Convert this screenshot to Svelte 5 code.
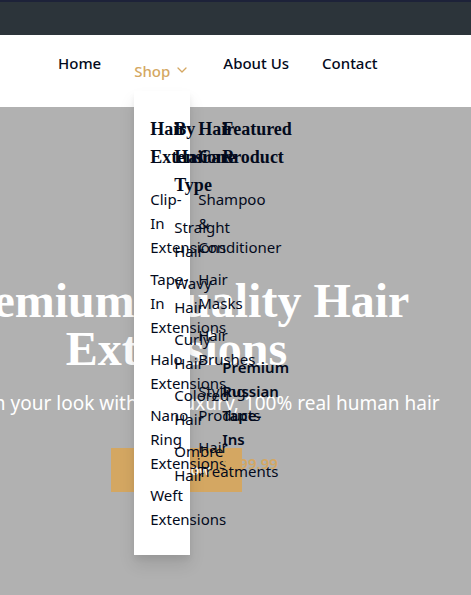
<script>
  const menu = [
    {
      title: 'Hair Extensions',
      items: ['Clip-In Extensions', 'Tape-In Extensions', 'Halo Extensions', 'Nano Ring Extensions', 'Weft Extensions']
    },
    {
      title: 'By Hair Type',
      items: ['Straight Hair', 'Wavy Hair', 'Curly Hair', 'Colored Hair', 'Ombre Hair']
    },
    {
      title: 'Hair Care',
      items: ['Shampoo & Conditioner', 'Hair Masks', 'Hair Brushes', 'Styling Products', 'Hair Treatments']
    }
  ];
</script>

<div class="page">
  <div class="topbar"></div>
  <header>
    <nav>
      <a href="#home">Home</a>
      <div class="shop">
        <a class="active" href="#shop">
          Shop
          <svg width="16" height="16" viewBox="0 0 16 16" fill="none" stroke="currentColor" stroke-width="1.3" stroke-linecap="round" stroke-linejoin="round" aria-hidden="true">
            <path d="M4 5 8 9 12 5" />
          </svg>
        </a>
        <div class="mega">
          {#each menu as column}
            <section>
              <h3>{column.title}</h3>
              <ul>
                {#each column.items as item}
                  <li><a href="#shop">{item}</a></li>
                {/each}
              </ul>
            </section>
          {/each}
          <section>
            <h3>Featured Product</h3>
            <div class="photo"></div>
            <h4>Premium Russian Tape-Ins</h4>
            <p class="price">$299.99</p>
          </section>
        </div>
      </div>
      <a href="#about">About Us</a>
      <a href="#contact">Contact</a>
    </nav>
  </header>
  <main>
    <div class="hero">
      <h1>Premium Quality Hair<br />Extensions</h1>
      <p>Transform your look with our luxury, 100% real human hair</p>
      <button type="button">Shop Now</button>
    </div>
  </main>
</div>

<style>
  :global(body) {
    margin: 0;
  }
  .page {
    display: flex;
    flex-direction: column;
    min-height: 100vh;
    overflow: hidden;
    font: 15px/24px 'Noto Sans', sans-serif;
    color: #030a1c;
    background: #b1b1b1;
  }
  .topbar {
    height: 33px;
    border-top: 2px solid #1d2239;
    background: #2c343a;
  }
  header {
    position: relative;
    z-index: 1;
    background: #fff;
  }
  nav {
    display: flex;
    gap: 33px;
    height: 56px;
    padding: 16px 0 0 58px;
  }
  a {
    color: inherit;
    text-decoration: none;
  }
  nav > a,
  .active {
    font-weight: 500;
    white-space: nowrap;
  }
  .shop {
    position: relative;
    padding-top: 8px;
  }
  .active {
    display: flex;
    align-items: center;
    gap: 4px;
    color: #d4a762;
  }
  .mega {
    position: absolute;
    top: 40px;
    left: 0;
    box-sizing: border-box;
    width: 100%;
    display: grid;
    grid-template-columns: repeat(4, minmax(0, 1fr));
    column-gap: 24px;
    padding: 24px 16px;
    background: #fff;
    box-shadow: 0 10px 15px rgba(0, 0, 0, 0.1), 0 4px 6px rgba(0, 0, 0, 0.05);
  }
  h1,
  h3,
  h4,
  p {
    margin: 0;
  }
  h1,
  h3 {
    font-family: 'Liberation Serif', serif;
    font-weight: 700;
  }
  h3 {
    margin-bottom: 16px;
    font-size: 18px;
    line-height: 28px;
  }
  ul {
    display: flex;
    flex-direction: column;
    gap: 8px;
    margin: 0;
    padding: 0;
    list-style: none;
  }
  .photo {
    height: 160px;
    margin-bottom: 8px;
  }
  h4 {
    font-size: 15px;
    font-weight: 600;
  }
  .price {
    font-weight: 600;
    color: #d4a762;
  }
  main {
    flex: 1;
    display: flex;
    justify-content: center;
    padding-top: 170px;
  }
  .hero {
    flex: none;
    margin-right: 118px;
    text-align: center;
    color: #fff;
    white-space: nowrap;
  }
  h1 {
    margin-bottom: 16px;
    font-size: 48px;
    line-height: 48px;
  }
  .hero p {
    margin-bottom: 31px;
    font-size: 19px;
    line-height: 28px;
  }
  button {
    padding: 10px 32px;
    border: 0;
    background: #d4a762;
    color: #fff;
    font: 500 14px/24px 'Noto Sans', sans-serif;
  }
</style>
